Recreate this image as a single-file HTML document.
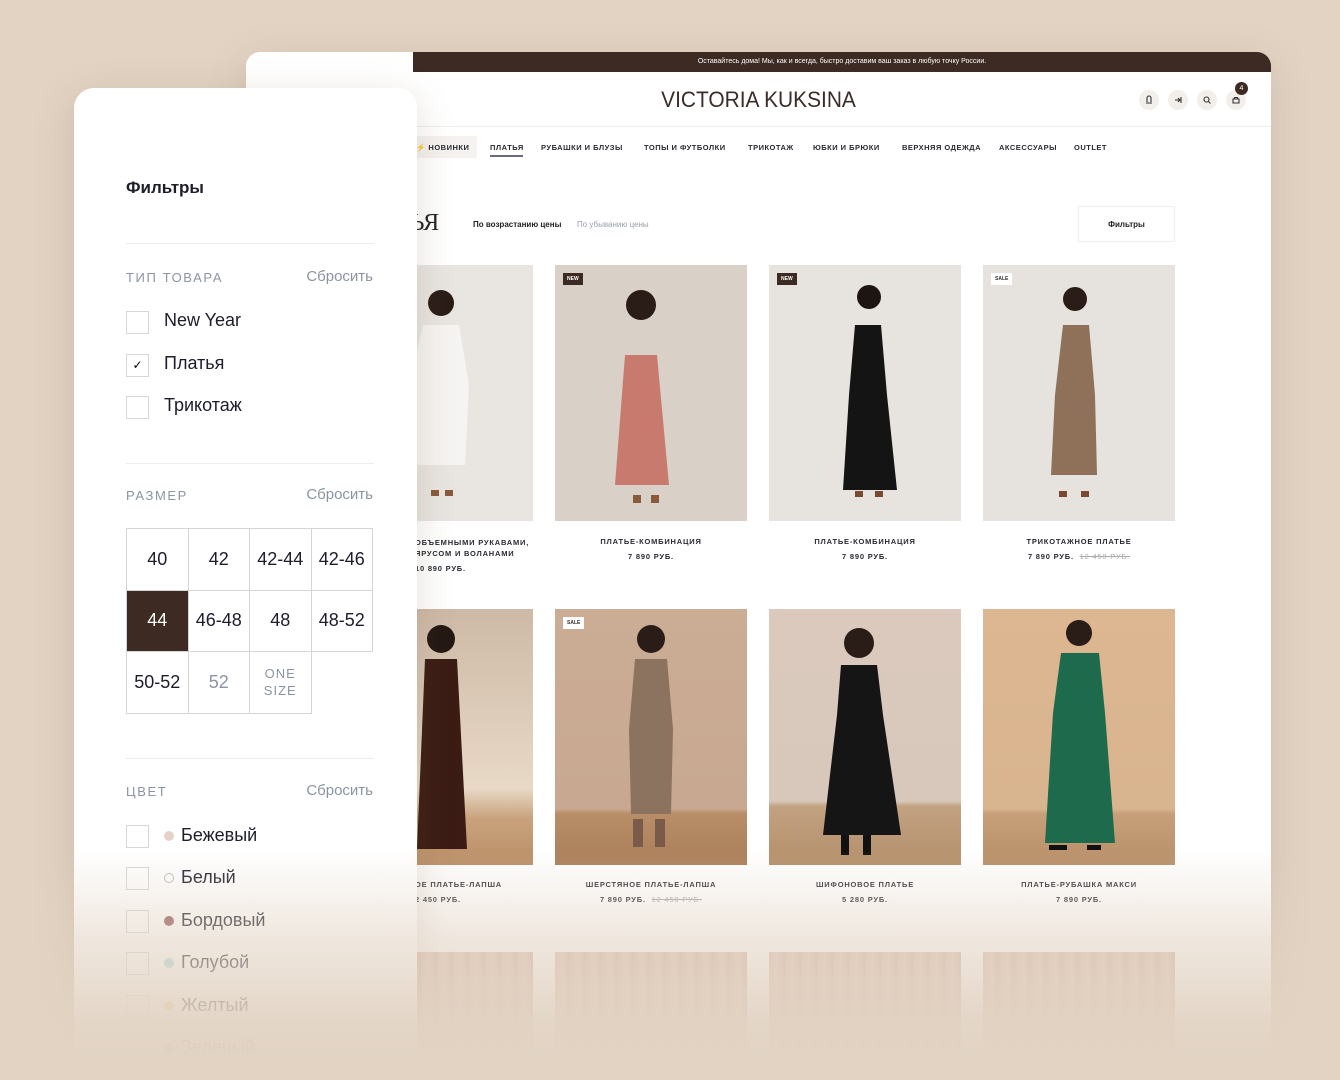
<!DOCTYPE html>
<html><head><meta charset="utf-8"><style>
*{margin:0;padding:0;box-sizing:border-box}
html,body{width:1340px;height:1080px;overflow:hidden}
body{background:#e2d3c3;font-family:"Liberation Sans",sans-serif;position:relative}
.abs{position:absolute}
#site{left:246px;top:52px;width:1025px;height:1028px;background:#fff;border-radius:14px 14px 0 0;box-shadow:0 10px 40px rgba(120,90,60,.18);overflow:hidden}
#bar{left:167px;top:0;width:858px;height:20px;background:#3d2a22;color:#fff;font-size:7px;text-align:center;line-height:20px}
#logo{left:0;width:1025px;top:35px;text-align:center;font-size:22px;color:#3a2c28;transform:scaleX(.95)}
.ic{top:38px;width:20px;height:20px;border-radius:50%;background:#f2eeea}
#hr{left:167px;top:74px;width:858px;height:1px;background:#eee}
.nav{top:91px;font-size:7.5px;font-weight:bold;color:#2a2a33;letter-spacing:.5px}
.pimg{width:192px;height:256px;overflow:hidden}
.pn{width:192px;text-align:center;font-size:7.5px;font-weight:bold;letter-spacing:.8px;color:#2a2a33}
.tag{left:8px;top:8px;background:#fff;font-size:5px;font-weight:bold;padding:3px 4px;color:#333}
.tag.d{background:#3d2a22;color:#fff}
#panel{left:74px;top:88px;width:343px;height:992px;background:#fff;border-radius:20px 20px 0 0;box-shadow:0 10px 40px rgba(120,90,60,.2)}
.lab{font-size:13px;letter-spacing:1.6px;color:#8b94a3}
.rst{font-size:15px;color:#8b94a3}
.cb{width:23px;height:23px;border:1.5px solid #d7d7d7;background:#fff}
.cl{font-size:18px;color:#1d1d2c}
.line{height:1px;background:#ececec;width:248px;left:52px}
#sz{left:52px;top:440px;border-collapse:collapse}
#sz td{width:61.5px;height:61.5px;border:1.5px solid #d5d5d5;text-align:center;font-size:18px;color:#1d1d2c}
.dot{width:10px;height:10px;border-radius:50%}
#fade{left:0;top:0;width:1340px;height:1080px;background:linear-gradient(to bottom,rgba(226,211,195,0) 0,rgba(226,211,195,0) 850px,rgba(226,211,195,.55) 940px,rgba(226,211,195,.93) 1020px,#e2d3c3 1060px)}
</style></head><body>

<div id="site" class="abs">
 <div id="bar" class="abs">Оставайтесь дома! Мы, как и всегда, быстро доставим ваш заказ в любую точку России.</div>
 <div id="logo" class="abs">VICTORIA KUKSINA</div>
 <div class="abs ic" style="left:893px"><svg width="20" height="20"><path d="M7 13h6M8 12V8a2 2 0 014 0v4" stroke="#333" fill="none" stroke-width="1.1"/></svg></div>
 <div class="abs ic" style="left:922px"><svg width="20" height="20"><path d="M7 10h5M10 8l2 2-2 2M13 7v6" stroke="#333" fill="none" stroke-width="1.1"/></svg></div>
 <div class="abs ic" style="left:951px"><svg width="20" height="20"><circle cx="9.5" cy="9.5" r="2.5" stroke="#333" fill="none" stroke-width="1.1"/><path d="M11.5 11.5l2 2" stroke="#333" stroke-width="1.1"/></svg></div>
 <div class="abs ic" style="left:980px"><svg width="20" height="20"><path d="M7 13V9h6v4zM8.5 9V7.5h3V9" stroke="#333" fill="none" stroke-width="1.1"/></svg></div>
 <div class="abs" style="left:989px;top:30px;width:13px;height:13px;border-radius:50%;background:#3d2a22;color:#fff;font-size:7px;text-align:center;line-height:13px">4</div>
 <div id="hr" class="abs"></div>
 <div class="abs" style="left:165px;top:84px;width:66px;height:22px;background:#f5f2ef"></div>
 <div class="abs nav" style="left:170px">⚡ НОВИНКИ</div>
 <div class="abs nav" style="left:244px">ПЛАТЬЯ</div>
 <div class="abs" style="left:244px;top:103px;width:33px;height:2px;background:#6a6a80"></div>
 <div class="abs nav" style="left:295px">РУБАШКИ И БЛУЗЫ</div>
 <div class="abs nav" style="left:398px">ТОПЫ И ФУТБОЛКИ</div>
 <div class="abs nav" style="left:502px">ТРИКОТАЖ</div>
 <div class="abs nav" style="left:567px">ЮБКИ И БРЮКИ</div>
 <div class="abs nav" style="left:656px">ВЕРХНЯЯ ОДЕЖДА</div>
 <div class="abs nav" style="left:753px">АКСЕССУАРЫ</div>
 <div class="abs nav" style="left:828px">OUTLET</div>
 <div class="abs" style="left:150px;top:158px;font-family:'Liberation Serif',serif;font-size:24px;color:#222">ТЬЯ</div>
 <div class="abs" style="left:227px;top:168px;font-size:8px;color:#222;font-weight:bold">По возрастанию цены</div>
 <div class="abs" style="left:331px;top:168px;font-size:8px;color:#9aa0aa">По убыванию цены</div>
 <div class="abs" style="left:832px;top:154px;width:97px;height:36px;border:1px solid #eee;text-align:center;line-height:35px;font-size:8px;font-weight:bold;color:#222">Фильтры</div>
</div>

<div id="prods">
<div class="abs pimg" style="left:341px;top:265px;background:#e9e5e1"><svg width="192" height="256"><circle cx="100" cy="38" r="13" fill="#2a1d18"/><path d="M82 60h36l10 60-4 80H74l-6-80z" fill="#f6f4f2"/><path d="M90 225h8v6h-8zM104 225h8v6h-8z" fill="#8a5a3a"/></svg></div>
<div class="abs pimg" style="left:555px;top:265px;background:#d9d0c8"><svg width="192" height="256"><circle cx="86" cy="40" r="15" fill="#2a1d18"/><path d="M70 90h32l12 130H60z" fill="#c97a6e"/><path d="M78 230h8v8h-8zM96 230h8v8h-8z" fill="#8a5a3a"/></svg><div class="abs tag d">NEW</div></div>
<div class="abs pimg" style="left:769px;top:265px;background:#e7e3df"><svg width="192" height="256"><circle cx="100" cy="32" r="12" fill="#1d1512"/><path d="M86 60h26l6 70 10 95H74l6-95z" fill="#141414"/><path d="M86 226h8v6h-8zM106 226h8v6h-8z" fill="#7a4a30"/></svg><div class="abs tag d">NEW</div></div>
<div class="abs pimg" style="left:983px;top:265px;background:#e6e2de"><svg width="192" height="256"><circle cx="92" cy="34" r="12" fill="#2a1d18"/><path d="M80 60h26l6 70 2 80H68l4-80z" fill="#8e7158"/><path d="M76 226h8v6h-8zM98 226h8v6h-8z" fill="#7a4a30"/></svg><div class="abs tag">SALE</div></div>
<div class="abs pn" style="left:341px;top:537px;text-align:left;padding-left:74px;line-height:11px">ОБЪЕМНЫМИ РУКАВАМИ,<br>ЯРУСОМ И ВОЛАНАМИ<br><span style="line-height:19px">10 890 РУБ.</span></div>
<div class="abs pn" style="left:555px;top:537px">ПЛАТЬЕ-КОМБИНАЦИЯ</div><div class="abs pn" style="left:555px;top:552px">7 890 РУБ.</div>
<div class="abs pn" style="left:769px;top:537px">ПЛАТЬЕ-КОМБИНАЦИЯ</div><div class="abs pn" style="left:769px;top:552px">7 890 РУБ.</div>
<div class="abs pn" style="left:983px;top:537px">ТРИКОТАЖНОЕ ПЛАТЬЕ</div><div class="abs pn" style="left:983px;top:552px">7 890 РУБ. &nbsp;<s style="color:#aaa;font-weight:normal">12 450 РУБ.</s></div>
<div class="abs pimg" style="left:341px;top:609px;background:linear-gradient(#cdb9a6 0,#e8d9c6 70%,#c9a27c 82%,#b98e66)"><svg width="192" height="256"><circle cx="100" cy="30" r="14" fill="#241813"/><path d="M84 50h32l10 190H76z" fill="#3a1c14"/></svg></div>
<div class="abs pimg" style="left:555px;top:609px;background:linear-gradient(#cbac94 0,#c8a891 78%,#b88e68 80%,#a97e58)"><svg width="192" height="256"><circle cx="96" cy="30" r="14" fill="#2a1d18"/><path d="M80 50h32l6 70-2 85H76l-2-85z" fill="#8c735f"/><path d="M78 210h10v28H78zM100 210h10v28h-10z" fill="#7a5a48"/></svg><div class="abs tag">SALE</div></div>
<div class="abs pimg" style="left:769px;top:609px;background:linear-gradient(#dac9bc 0,#d8c8bb 75%,#c2a282 77%,#b48f6a)"><svg width="192" height="256"><circle cx="90" cy="34" r="15" fill="#2a1d18"/><path d="M72 56h36l6 50 18 120H54l14-120z" fill="#151515"/><path d="M72 226h8v20h-8zM94 226h8v20h-8z" fill="#111"/></svg></div>
<div class="abs pimg" style="left:983px;top:609px;background:linear-gradient(#ddb791 0,#d8b48f 78%,#c7a07a 80%,#b78e68)"><svg width="192" height="256"><circle cx="96" cy="24" r="13" fill="#2a1d18"/><path d="M78 44h38l6 60 10 130H62l8-130z" fill="#1e6a4c"/><path d="M66 236h18v5H66zM104 236h14v5h-14z" fill="#111"/></svg></div>
<div class="abs pn" style="left:341px;top:880px;text-align:left;padding-left:74px">ОЕ ПЛАТЬЕ-ЛАПША</div><div class="abs pn" style="left:341px;top:895px;text-align:left;padding-left:74px">2 450 РУБ.</div>
<div class="abs pn" style="left:555px;top:880px">ШЕРСТЯНОЕ ПЛАТЬЕ-ЛАПША</div><div class="abs pn" style="left:555px;top:895px">7 890 РУБ. &nbsp;<s style="color:#aaa;font-weight:normal">12 450 РУБ.</s></div>
<div class="abs pn" style="left:769px;top:880px">ШИФОНОВОЕ ПЛАТЬЕ</div><div class="abs pn" style="left:769px;top:895px">5 280 РУБ.</div>
<div class="abs pn" style="left:983px;top:880px">ПЛАТЬЕ-РУБАШКА МАКСИ</div><div class="abs pn" style="left:983px;top:895px">7 890 РУБ.</div>
<div class="abs pimg" style="left:341px;top:952px;height:128px;background:repeating-linear-gradient(90deg,#dcc0b4 0,#e4cabe 8px,#d4b6a9 16px)"></div>
<div class="abs pimg" style="left:555px;top:952px;height:128px;background:repeating-linear-gradient(90deg,#dcc0b4 0,#e4cabe 8px,#d4b6a9 16px)"></div>
<div class="abs pimg" style="left:769px;top:952px;height:128px;background:repeating-linear-gradient(90deg,#dcc0b4 0,#e4cabe 8px,#d4b6a9 16px)"></div>
<div class="abs pimg" style="left:983px;top:952px;height:128px;background:repeating-linear-gradient(90deg,#dcc0b4 0,#e4cabe 8px,#d4b6a9 16px)"></div>
</div>

<div id="panel" class="abs">
 <div class="abs" style="left:52px;top:90px;font-size:17px;font-weight:bold;color:#1d1d2c">Фильтры</div>
 <div class="abs line" style="top:155px"></div>
 <div class="abs lab" style="left:52px;top:182px">ТИП ТОВАРА</div>
 <div class="abs rst" style="right:44px;top:180px">Сбросить</div>
 <div class="abs cb" style="left:52px;top:223px"></div><div class="abs cl" style="left:90px;top:222px">New Year</div>
 <div class="abs cb" style="left:52px;top:266px;text-align:center;font-size:12px;line-height:20px">✓</div><div class="abs cl" style="left:90px;top:265px">Платья</div>
 <div class="abs cb" style="left:52px;top:308px"></div><div class="abs cl" style="left:90px;top:307px">Трикотаж</div>
 <div class="abs line" style="top:375px"></div>
 <div class="abs lab" style="left:52px;top:400px">РАЗМЕР</div>
 <div class="abs rst" style="right:44px;top:398px">Сбросить</div>
 <table id="sz" class="abs">
  <tr><td>40</td><td>42</td><td>42-44</td><td>42-46</td></tr>
  <tr><td style="background:#3d2a22;color:#fff">44</td><td>46-48</td><td>48</td><td>48-52</td></tr>
  <tr><td>50-52</td><td style="color:#8b94a3">52</td><td style="color:#8b94a3;font-size:13px;line-height:17px;letter-spacing:1px">ONE<br>SIZE</td><td style="border:none"></td></tr>
 </table>
 <div class="abs line" style="top:670px"></div>
 <div class="abs lab" style="left:52px;top:696px">ЦВЕТ</div>
 <div class="abs rst" style="right:44px;top:694px">Сбросить</div>
 <div class="abs cb" style="left:52px;top:737px"></div><div class="abs dot" style="left:90px;top:743px;background:#e6d2c6"></div><div class="abs cl" style="left:107px;top:737px">Бежевый</div>
 <div class="abs cb" style="left:52px;top:779px"></div><div class="abs dot" style="left:90px;top:785px;border:1px solid #bbb"></div><div class="abs cl" style="left:107px;top:779px">Белый</div>
 <div class="abs cb" style="left:52px;top:822px"></div><div class="abs dot" style="left:90px;top:828px;background:#8e5a5a"></div><div class="abs cl" style="left:107px;top:822px">Бордовый</div>
 <div class="abs cb" style="left:52px;top:864px"></div><div class="abs dot" style="left:90px;top:870px;background:#a9dbe6"></div><div class="abs cl" style="left:107px;top:864px">Голубой</div>
 <div class="abs cb" style="left:52px;top:907px"></div><div class="abs dot" style="left:90px;top:913px;background:#f0d27a"></div><div class="abs cl" style="left:107px;top:907px">Желтый</div>
 <div class="abs cb" style="left:52px;top:949px"></div><div class="abs dot" style="left:90px;top:955px;background:#3a8a5a"></div><div class="abs cl" style="left:107px;top:949px">Зеленый</div>
</div>

<div id="fade" class="abs"></div>
</body></html>
